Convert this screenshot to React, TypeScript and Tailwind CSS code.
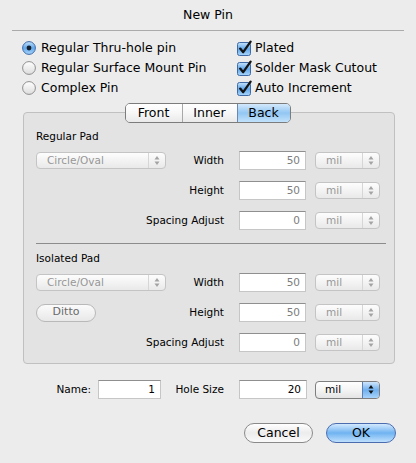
import type { ReactNode } from "react";

function Radio({ on }: { on?: boolean }) {
  return (
    <svg width="14" height="14" viewBox="0 0 14 14" className="shrink-0">
      <defs>
        <linearGradient id="radioOn" x1="0" y1="0" x2="0" y2="1">
          <stop offset="0" stopColor="#c4e2fb" />
          <stop offset="0.5" stopColor="#62a8ec" />
          <stop offset="1" stopColor="#a9d6fb" />
        </linearGradient>
        <linearGradient id="radioOff" x1="0" y1="0" x2="0" y2="1">
          <stop offset="0" stopColor="#ffffff" />
          <stop offset="0.55" stopColor="#ececec" />
          <stop offset="1" stopColor="#dcdcdc" />
        </linearGradient>
      </defs>
      <circle
        cx="7"
        cy="7"
        r="6.4"
        fill={on ? "url(#radioOn)" : "url(#radioOff)"}
        stroke={on ? "#3f6aa6" : "#8e8e8e"}
      />
      {on && <circle cx="7" cy="7" r="2.4" fill="#18202c" />}
    </svg>
  );
}

function Check() {
  return (
    <svg width="16" height="16" viewBox="0 0 16 16" className="shrink-0">
      <defs>
        <linearGradient id="chk" x1="0" y1="0" x2="0" y2="1">
          <stop offset="0" stopColor="#c4e2fb" />
          <stop offset="0.5" stopColor="#62a8ec" />
          <stop offset="1" stopColor="#a9d6fb" />
        </linearGradient>
      </defs>
      <rect x="0.5" y="2.5" width="13" height="13" rx="2" fill="url(#chk)" stroke="#3f6aa6" />
      <path
        d="M3.2 8.6 L6.2 12.2 L13.6 1.6"
        fill="none"
        stroke="#141414"
        strokeWidth="2.3"
        strokeLinecap="round"
        strokeLinejoin="round"
      />
    </svg>
  );
}

function Arrows({ color }: { color: string }) {
  return (
    <svg width="6" height="11" viewBox="0 0 6 11">
      <path d="M3 1 L5.5 4.5 L0.5 4.5 Z" fill={color} />
      <path d="M3 10 L5.5 6.5 L0.5 6.5 Z" fill={color} />
    </svg>
  );
}

function DimPopup({ label, w }: { label: string; w: string }) {
  return (
    <div
      className={`${w} flex h-[17px] items-center rounded-[4px] border border-[#c4c4c4] bg-gradient-to-b from-[#fdfdfd] via-[#f3f3f3] to-[#e9e9e9] text-[10.5px] text-[#979797]`}
    >
      <span className="flex-1 pl-[10px]">{label}</span>
      <span className="flex h-full w-[17px] items-center justify-center border-l border-[#d6d6d6]">
        <Arrows color="#a3a3a3" />
      </span>
    </div>
  );
}

function Field({ value, w, dim }: { value: string; w: string; dim?: boolean }) {
  return (
    <div
      className={`${w} flex h-[19px] items-center justify-end border border-[#c6c6c6] border-t-[#8f8f8f] bg-white pr-[5px] text-[10.5px] ${
        dim ? "text-[#7d7d7d]" : "text-black"
      }`}
    >
      {value}
    </div>
  );
}

function PadRow({ left, label, value }: { left?: ReactNode; label: string; value: string }) {
  return (
    <div className="flex h-[19px] items-center">
      <div className="flex w-[130px] items-center">{left}</div>
      <div className="flex w-[58px] justify-end whitespace-nowrap text-[10.5px] text-black">
        <span>{label}</span>
      </div>
      <div className="ml-[15px]">
        <Field value={value} w="w-[67px]" dim />
      </div>
      <div className="ml-[9px]">
        <DimPopup label="mil" w="w-[65px]" />
      </div>
    </div>
  );
}

function PadSection({ title, ditto }: { title: string; ditto?: boolean }) {
  return (
    <div>
      <div className="h-[14px] text-[10.5px] leading-[14px] text-black">{title}</div>
      <div className="mt-[8px] flex flex-col gap-[11px]">
        <PadRow left={<DimPopup label="Circle/Oval" w="w-[130px]" />} label="Width" value="50" />
        <PadRow
          left={
            ditto ? (
              <div className="flex h-[18px] w-[60px] items-center justify-center rounded-full border border-[#b9b9b9] bg-gradient-to-b from-[#fbfbfb] to-[#e8e8e8] text-[11px] text-[#6a6a6a]">
                Ditto
              </div>
            ) : null
          }
          label="Height"
          value="50"
        />
        <PadRow label="Spacing Adjust" value="0" />
      </div>
    </div>
  );
}

export default function App() {
  return (
    <div className="h-[463px] w-[416px] overflow-hidden bg-[#ececec] font-['DejaVu_Sans',sans-serif] text-[12.5px] text-black">
      <div className="mx-[12px] flex h-[31px] items-center justify-center border-b border-[#ababab] pt-[1px]">
        New Pin
      </div>

      <div className="flex pt-[7px]">
        <div className="ml-[22px] flex w-[215px] flex-col">
          {[
            ["Regular Thru-hole pin", true],
            ["Regular Surface Mount Pin", false],
            ["Complex Pin", false],
          ].map(([t, on]) => (
            <div key={t as string} className="flex h-[20px] items-center gap-[5px] whitespace-nowrap">
              <Radio on={on as boolean} />
              <span>{t as string}</span>
            </div>
          ))}
        </div>
        <div className="flex flex-col">
          {["Plated", "Solder Mask Cutout", "Auto Increment"].map((t) => (
            <div key={t} className="flex h-[20px] items-center gap-[2px] whitespace-nowrap">
              <Check />
              <span>{t}</span>
            </div>
          ))}
        </div>
      </div>

      <div className="relative z-10 mt-[5px] flex justify-center pr-[1px]">
        <div className="flex h-[20px] overflow-hidden rounded-[5px] border border-[#7c7c7c] text-[12.5px]">
          <div className="flex w-[56px] items-center justify-center bg-gradient-to-b from-white via-[#f7f7f7] to-[#e9e9e9]">
            Front
          </div>
          <div className="flex w-[55px] items-center justify-center border-l border-[#a8a8a8] bg-gradient-to-b from-white via-[#f7f7f7] to-[#e9e9e9]">
            Inner
          </div>
          <div className="flex w-[53px] items-center justify-center border-l border-[#6b87b3] bg-gradient-to-b from-[#d4e9fc] via-[#92c6f2] to-[#c2e2fb]">
            Back
          </div>
        </div>
      </div>

      <div className="mx-[23px] -mt-[11px] w-[372px] rounded-[4px] border border-[#c0c0c0] bg-[#e3e3e3] pb-[11px] pl-[12px] pt-[16px]">
        <PadSection title="Regular Pad" />
        <div className="mr-[8px] mt-[13px] border-t border-[#8c8c8c]" />
        <div className="mt-[7px]">
          <PadSection title="Isolated Pad" ditto />
        </div>
      </div>

      <div className="mt-[16px] flex h-[19px] items-center">
        <span className="w-[91px] text-right text-[10.5px]">Name:</span>
        <div className="ml-[7px]">
          <Field value="1" w="w-[63px]" />
        </div>
        <div className="ml-[15px] flex w-[48px] justify-end whitespace-nowrap text-[10.5px]">
          <span>Hole Size</span>
        </div>
        <div className="ml-[15px]">
          <Field value="20" w="w-[68px]" />
        </div>
        <div className="ml-[8px] flex h-[18px] w-[65px] items-center overflow-hidden rounded-[4px] border border-[#7e7e7e] bg-gradient-to-b from-white via-[#f4f4f4] to-[#e4e4e4] text-[10.5px]">
          <span className="flex-1 pl-[9px]">mil</span>
          <span className="flex h-full w-[17px] items-center justify-center border-l border-[#5a7fb5] bg-gradient-to-b from-[#cfe6fc] via-[#6eb0ee] to-[#a7d3fa]">
            <Arrows color="#111" />
          </span>
        </div>
      </div>

      <div className="mt-[24px] flex justify-end gap-[13px] pr-[20px]">
        <div className="flex h-[20px] w-[69px] items-center justify-center rounded-full border border-[#8a8a8a] bg-gradient-to-b from-white via-[#ececec] to-[#fafafa]">
          Cancel
        </div>
        <div className="flex h-[20px] w-[70px] items-center justify-center rounded-full border border-[#4b6db0] bg-gradient-to-b from-[#d3e9fd] via-[#6fb3f1] to-[#bfe0fc]">
          OK
        </div>
      </div>
    </div>
  );
}
